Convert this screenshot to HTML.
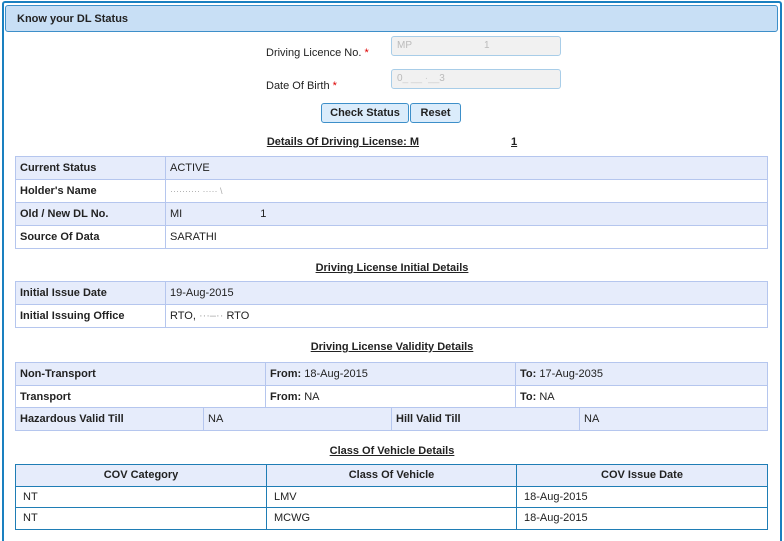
<!DOCTYPE html>
<html><head><meta charset="utf-8"><style>
*{margin:0;padding:0;box-sizing:border-box}
body{width:784px;height:539px;overflow:hidden;background:#fff;font-family:"Liberation Sans",Arial,sans-serif;font-size:11px;color:#222;position:relative}
.a{position:absolute}
.outer{left:2px;top:1px;width:780px;height:540px;border:2px solid #1a80c0;border-bottom:none;border-radius:3px 3px 0 0}
.hdr{left:5px;top:5px;width:773px;height:27px;background:#c8dff5;border:1px solid #3d8fc9;border-radius:3px;font-weight:bold;padding:7px 0 0 11px;font-size:11px}
.lbl{font-size:11px}
.req{color:#d00}
.inp{width:170px;height:20px;background:#f1f1f1;border:1px solid #a8cde8;border-radius:3px;color:#bbb;padding:3px 0 0 5px;font-size:10px}
.btn{height:20px;background:#dbecfb;border:1px solid #3d8fc9;border-radius:3px;font-weight:bold;text-align:center;padding-top:3px}
.ttl{font-weight:bold;text-decoration:underline;text-align:center;left:0;width:784px}
table{position:absolute;border-collapse:collapse;left:15px;width:753px;table-layout:fixed}
td{border:1px solid #b5c6ee;height:23px;padding:0 4px;vertical-align:middle}
tr.s td{background:#e6ecfb}
td.b{font-weight:bold}
table.c td{border:1px solid #1f7db5;height:21.5px;padding:0 7px}
table.c tr.h td{background:#e6ecfb;font-weight:bold;text-align:center}
</style></head><body>
<div class="a outer"></div>
<div class="a hdr">Know your DL Status</div>
<div class="a lbl" style="left:266px;top:47px">Driving Licence No. <span class="req">*</span></div>
<div class="a inp" style="left:391px;top:36px">MP<span style="display:inline-block;width:72px"></span>1</div>
<div class="a lbl" style="left:266px;top:80px">Date Of Birth <span class="req">*</span></div>
<div class="a inp" style="left:391px;top:69px">0<span style="color:#ccc">_ __ ·__</span>3</div>
<div class="a btn" style="left:321px;top:103px;width:88px">Check Status</div>
<div class="a btn" style="left:410px;top:103px;width:51px">Reset</div>
<div class="a ttl" style="top:136px">Details Of Driving License: M<span style="display:inline-block;width:92px"></span>1</div>
<table style="top:156px"><colgroup><col style="width:150px"><col></colgroup>
<tr class="s"><td class="b">Current Status</td><td>ACTIVE</td></tr>
<tr><td class="b">Holder's Name</td><td><span style="color:#aaa;font-size:9px">·········· ····· \</span></td></tr>
<tr class="s"><td class="b">Old / New DL No.</td><td>MI<span style="display:inline-block;width:78px"></span>1</td></tr>
<tr><td class="b">Source Of Data</td><td>SARATHI</td></tr>
</table>
<div class="a ttl" style="top:262px">Driving License Initial Details</div>
<table style="top:281px"><colgroup><col style="width:150px"><col></colgroup>
<tr class="s"><td class="b">Initial Issue Date</td><td>19-Aug-2015</td></tr>
<tr><td class="b" style="height:22px">Initial Issuing Office</td><td>RTO,<span style="color:#aaa"> ···–·· </span> RTO</td></tr>
</table>
<div class="a ttl" style="top:341px">Driving License Validity Details</div>
<table style="top:362px"><colgroup><col style="width:250px"><col style="width:250px"><col></colgroup>
<tr class="s"><td class="b">Non-Transport</td><td><b>From:</b> 18-Aug-2015</td><td><b>To:</b> 17-Aug-2035</td></tr>
<tr><td class="b">Transport</td><td><b>From:</b> NA</td><td><b>To:</b> NA</td></tr>
</table>
<table style="top:407px"><colgroup><col style="width:188px"><col style="width:188px"><col style="width:188px"><col></colgroup>
<tr class="s"><td class="b">Hazardous Valid Till</td><td>NA</td><td class="b">Hill Valid Till</td><td>NA</td></tr>
</table>
<div class="a ttl" style="top:445px">Class Of Vehicle Details</div>
<table class="c" style="top:464px"><colgroup><col style="width:251px"><col style="width:250px"><col></colgroup>
<tr class="h"><td>COV Category</td><td>Class Of Vehicle</td><td>COV Issue Date</td></tr>
<tr><td>NT</td><td>LMV</td><td>18-Aug-2015</td></tr>
<tr><td>NT</td><td>MCWG</td><td>18-Aug-2015</td></tr>
</table>
</body></html>
